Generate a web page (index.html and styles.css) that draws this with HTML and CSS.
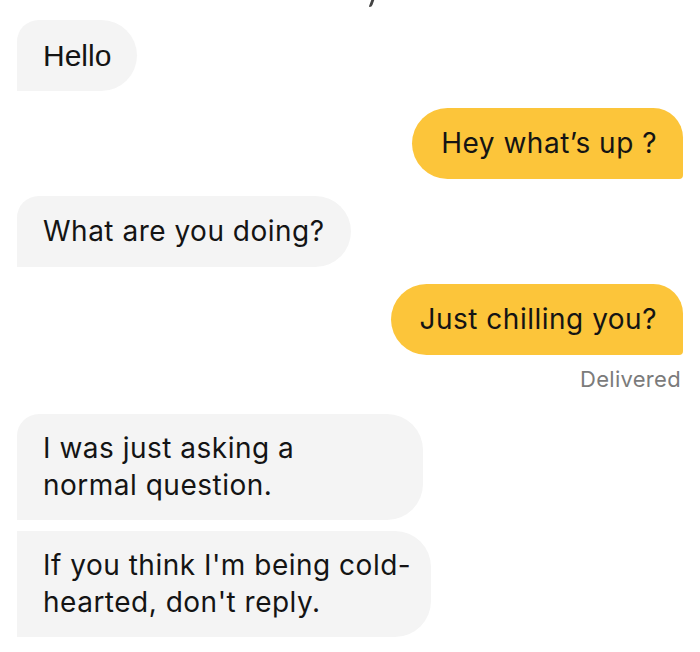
FILE: index.html
```html
<!DOCTYPE html>
<html lang="en">
  <head>
    <meta charset="UTF-8" />
    <meta name="viewport" content="width=device-width, initial-scale=1.0" />
    <title>Chat</title>
    <link rel="stylesheet" href="styles.css">
  </head>
  <body>
    <div class="cut-line"><span class="cut-mark"></span></div>
    <ul class="messages">
      <li class="row received-row">
        <div class="bubble received first plain-font">Hello</div>
      </li>
      <li class="row sent-row">
        <div class="bubble sent">Hey what’s up ?</div>
      </li>
      <li class="row received-row">
        <div class="bubble received first">What are you doing?</div>
      </li>
      <li class="row sent-row">
        <div class="bubble sent">Just chilling you?</div>
      </li>
      <li class="status">Delivered</li>
      <li class="row received-row">
        <div class="bubble received first wrap narrow">I was just asking a<br />normal question.</div>
      </li>
      <li class="row received-row grouped">
        <div class="bubble received middle wrap">If you think I'm being cold-<br />hearted, don't reply.</div>
      </li>
    </ul>
  </body>
</html>
```

FILE: styles.css
```css
body {
  margin: 0;
  background: #fff;
  color: #141414;
  font-family: Inter, "Open Sans", sans-serif;
}

/* tail of a glyph cut off at the top edge */
.cut-line {
  height: 20px;
  display: flex;
  padding-left: 370px;
}
.cut-mark {
  width: 3px;
  height: 7px;
  background: #444;
  border-radius: 0 0 2px 1px;
  transform: skewX(-20deg);
}

.messages {
  list-style: none;
  margin: 0;
  padding: 0 17px;
}

.row {
  display: flex;
  margin-bottom: 17px;
}
.received-row {
  justify-content: flex-start;
}
.sent-row {
  justify-content: flex-end;
}
.row.grouped {
  margin-top: -6px;
}

.bubble {
  font-size: 28px;
  letter-spacing: 0.5px;
  line-height: 37px;
  padding: 17px 26px;
}

.plain-font {
  font-family: "Liberation Sans", Arial, sans-serif;
  font-size: 30px;
  letter-spacing: 0;
}

/* Styles for received messages */
.received {
  background: #f4f4f4;
  border-radius: 0 36px 36px 0;
}
.received.first {
  border-radius: 22px 36px 36px 0;
}
.received.middle {
  border-radius: 0 36px 36px 0;
}
.wrap {
  padding: 16px 20px 16px 26px;
  width: 368px;
  white-space: nowrap;
}
.wrap.narrow {
  width: 360px;
}

/* Styles for sent messages */
.sent {
  background: #fcc53a;
  border-radius: 36px 30px 4px 36px;
  padding-left: 29px;
}

.status {
  text-align: right;
  font-size: 22px;
  letter-spacing: 0.3px;
  line-height: 26px;
  color: #7b7b7b;
  margin: -6px 2px 22px 0;
}
```
